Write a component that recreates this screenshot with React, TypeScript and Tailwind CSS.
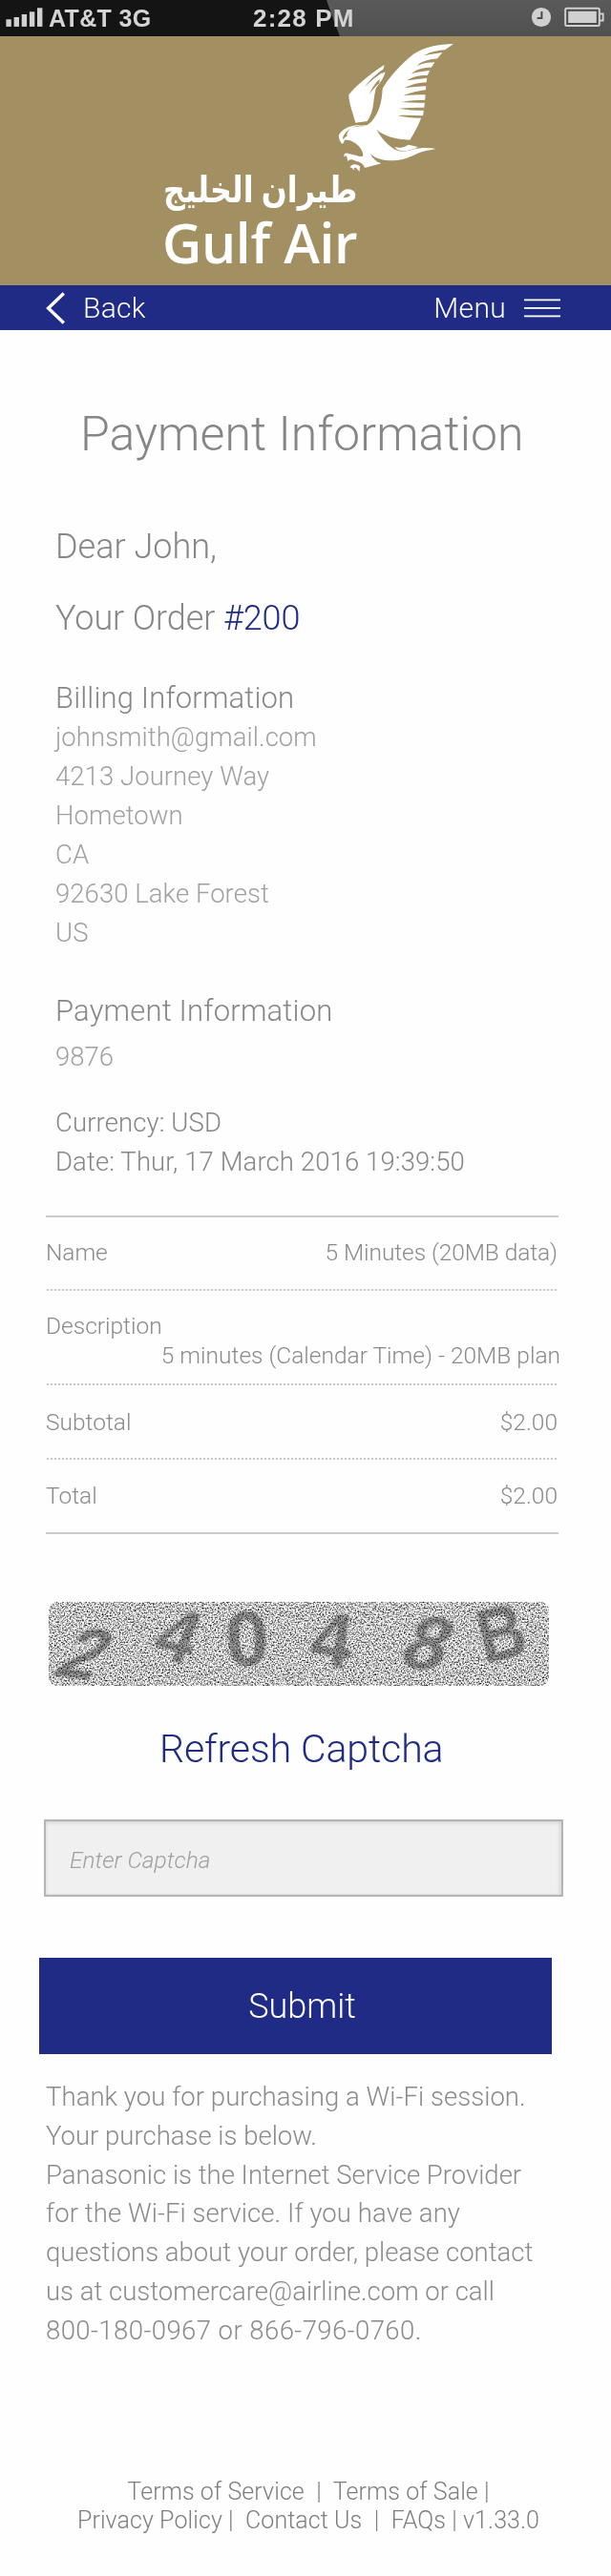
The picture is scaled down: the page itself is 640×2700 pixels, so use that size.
import type { ReactNode } from "react";

function StatusBar() {
  return (
    <div className="relative h-[38px] bg-[#141414] font-['Liberation_Sans'] text-[25px] leading-[38px] font-bold tracking-[0.35px] text-[#d4d4d4]">
      <div className="absolute inset-0 bg-linear-to-b from-[#5a5a5a] to-[#505050] [clip-path:polygon(342px_0,100%_0,100%_100%,356px_100%,350px_60%)]" />
      <div className="relative grid h-full grid-cols-[265px_1fr_auto] items-center">
        <div className="flex items-center pl-[6px]">
          <svg width="39" height="38" viewBox="0 0 39 38" fill="#d0d0d0">
            <rect x="0.4" y="20.3" width="5.4" height="7.6" />
            <rect x="8.6" y="18" width="5.4" height="9.9" />
            <rect x="16.7" y="15" width="5.4" height="12.9" />
            <rect x="24.9" y="12.3" width="5.4" height="15.6" />
            <rect x="33" y="8.3" width="5.4" height="19.6" />
          </svg>
          <span className="ml-[6px]">AT&amp;T 3G</span>
        </div>
        <span className="text-[26px] tracking-[1.2px]">2:28 PM</span>
        <div className="flex items-center pr-[5px]">
          <svg width="22" height="38" viewBox="0 0 22 38">
            <circle cx="11" cy="18" r="10.1" fill="#d0d0d0" />
            <path d="M11.4 12v7H6.6" fill="none" stroke="#4c4c4c" strokeWidth="2" />
          </svg>
          <svg className="ml-[13px]" width="44" height="38" viewBox="0 0 44 38">
            <rect x="1.2" y="8.7" width="35.6" height="18.4" rx="1.5" fill="#4a4a4a" stroke="#d0d0d0" strokeWidth="2" />
            <rect x="4.2" y="11.8" width="29.6" height="12.2" fill="#d0d0d0" />
            <path d="M37.5 14.5h3.2v7h-3.2" fill="none" stroke="#d0d0d0" strokeWidth="1.8" />
          </svg>
        </div>
      </div>
    </div>
  );
}

function Falcon() {
  return (
    <svg className="ml-[350px] block" width="130" height="145" viewBox="0 0 390 435">
      <g fill="#fff">
        <path d="M158 84C125 104 75 142 46 178C46 205 60 238 67 266L104 261C119 240 123 215 125 192C127 180 128 170 131 158C142 144 156 126 161 106L150 112Z" />
        <path d="M375 18C330 20 285 26 248 51C208 84 168 128 152 159C150 200 142 235 116 264L103 274L70 274C45 277 25 287 15 304C13 318 20 326 25 333L31 327C30 322 35 318 40 320C60 320 92 345 91 369C84 378 68 366 48 364C36 358 28 364 32 374C36 366 42 370 42 388C46 380 55 380 68 386C84 389 94 398 96 408L148 394C132 388 120 378 113 362C126 376 145 382 172 385C200 386 228 380 262 362C282 354 302 352 320 348C295 344 270 344 245 351C222 358 200 359 184 346C162 330 148 314 132 286C150 306 195 320 238 320C252 298 266 272 273 252L279 246L285 202L288 160L292 120L303 96L322 67L346 38Z" />
        <path d="M190 343C208 346 220 344 232 335C244 336 252 340 264 342C248 350 232 356 214 355C203 354 196 349 190 343Z" />
        <path d="M49 407C56 393 74 395 82 404C80 408 79 412 81 419C73 414 72 407 64 407C60 409 62 413 65 415C58 415 58 403 49 407Z" />
      </g>
      <g fill="#a39062">
        <path d="M349 36C325 39 300 43 282 55C300 49 322 49 341 45Z" />
        <path d="M325 64C300 67 276 71 260 87C278 78 298 77 317 76Z" />
        <path d="M307 92C282 92 258 97 242 112C262 105 282 105 302 101Z" />
        <path d="M295 117C270 116 246 120 229 133C250 129 271 129 294 125Z" />
        <path d="M292 139C266 140 242 145 222 157C244 153 268 152 292 151Z" />
        <path d="M291 162C266 165 240 170 217 181C240 178 266 178 290 178Z" />
        <path d="M288 194C262 194 236 196 212 201C238 203 262 204 287 203Z" />
        <path d="M284 218C258 218 230 218 204 221C230 226 256 227 283 227Z" />
        <path d="M281 244C252 243 226 242 200 243C226 250 252 252 279 251Z" />
        <path d="M163 92C138 107 114 128 96 153C115 133 138 116 162 101Z" />
        <path d="M143 128C130 140 118 156 109 179C118 166 128 153 142 142Z" />
        <path d="M70 277C54 280 38 291 28 310C26 319 30 321 33 313C36 309 40 311 41 307C38 305 42 291 54 283C60 279 80 277 98 276C90 273 80 274 70 277Z" />
      </g>
    </svg>
  );
}

function Header() {
  return (
    <header className="h-[261px] bg-[#a39062] pt-[2px] text-white">
      <Falcon />
      <div className="-mt-[15px] ml-[170px] flex w-[206px] flex-col">
        <span
          dir="rtl"
          className="h-[54px] origin-right scale-x-[0.835] pr-[2px] font-['Noto_Sans','DejaVu_Sans',sans-serif] text-[38px] leading-[54px] font-bold whitespace-nowrap"
        >
          طيران الخليج
        </span>
        <span className="font-['Open_Sans',sans-serif] text-[57px] leading-[60px] font-semibold tracking-[-0.35px] whitespace-nowrap">
          Gulf Air
        </span>
      </div>
    </header>
  );
}

function NavBar() {
  return (
    <nav className="flex h-[47px] items-center bg-[#1f2b85] pr-[53px] pl-[48px] text-[30px] leading-[47px] font-light tracking-[0.3px] text-white">
      <svg width="21" height="34" viewBox="0 0 21 34" fill="none" stroke="#fff" strokeWidth="3.4">
        <path d="M18.8 1.6L2.6 17L18.8 32.4" />
      </svg>
      <span className="ml-[18px]">Back</span>
      <span className="ml-auto">Menu</span>
      <svg className="ml-[19px]" width="38" height="20" viewBox="0 0 38 20" fill="#fff">
        <rect y="0.5" width="38" height="1.8" />
        <rect y="9" width="38" height="1.8" />
        <rect y="17.5" width="38" height="1.8" />
      </svg>
    </nav>
  );
}

function DottedRule() {
  return (
    <div className="mx-px h-[2px] bg-[repeating-linear-gradient(90deg,#c8c8c8_0_2px,#f6f6f6_2px_4px)]" />
  );
}

function Row({ label, children, className }: { label: string; children: ReactNode; className: string }) {
  return (
    <div className={`flex justify-between ${className}`}>
      <span>{label}</span>
      <span>{children}</span>
    </div>
  );
}

const glyphs = [
  { c: "2", t: "translate(39 54) rotate(8) skewX(-24) scale(0.95 0.98)" },
  { c: "4", t: "translate(136 35) rotate(14) skewX(-8) scale(0.92 1)" },
  { c: "0", t: "translate(208 38) rotate(-3) scale(1.02 1.02)" },
  { c: "4", t: "translate(297 39) rotate(8) scale(0.98 1)" },
  { c: "8", t: "translate(398 43) rotate(10) skewX(-14) scale(1 1.02)" },
  { c: "B", t: "translate(474 32) rotate(-14) scale(0.86 1)" },
];

function Captcha() {
  return (
    <svg className="mt-[71px] ml-[51px] block rounded-[9px]" width="524" height="88" viewBox="0 0 524 88">
      <filter id="grain" x="0" y="0" width="100%" height="100%" colorInterpolationFilters="sRGB">
        <feTurbulence type="fractalNoise" baseFrequency="0.62" numOctaves="2" seed="7" />
        <feColorMatrix values="2.1 0 0 0 -0.29  2.1 0 0 0 -0.29  2.1 0 0 0 -0.29  0 0 0 0 1" />
      </filter>
      <filter id="soft">
        <feGaussianBlur stdDeviation="1" />
      </filter>
      <rect width="524" height="88" filter="url(#grain)" />
      <g
        className="font-['Liberation_Sans'] text-[80px] font-bold mix-blend-multiply"
        fill="#a2a2a2"
        textAnchor="middle"
        filter="url(#soft)"
      >
        {glyphs.map((g, i) => (
          <text key={i} transform={g.t} y="28">
            {g.c}
          </text>
        ))}
      </g>
    </svg>
  );
}

export default function App() {
  return (
    <div className="min-h-[2700px] w-[640px] bg-[#fefefe] font-['Roboto',sans-serif] font-light">
      <StatusBar />
      <Header />
      <NavBar />

      <h1 className="mt-[79px] pl-[84px] text-[50px] leading-[60px] tracking-[0.09px] text-[#868686]">
        Payment Information
      </h1>

      <main className="pl-[58px] text-[#868686]">
        <p className="mt-[68px] text-[36px] leading-[40px]">Dear John,</p>
        <p className="mt-[35px] text-[36px] leading-[40px] tracking-[-0.1px]">
          Your Order <span className="text-[#1f2b85]">#200</span>
        </p>

        <h2 className="mt-[43px] text-[31px] leading-[41px] tracking-[0.14px]">Billing Information</h2>
        <div className="text-[27.5px] leading-[41px] tracking-[0.05px] text-[#a0a0a0]">
          <p>johnsmith@gmail.com</p>
          <p>4213 Journey Way</p>
          <p>Hometown</p>
          <p>CA</p>
          <p>92630 Lake Forest</p>
          <p>US</p>
        </div>

        <h2 className="mt-[41px] text-[31px] leading-[41px] tracking-[0.18px]">Payment Information</h2>
        <p className="mt-[7px] text-[27.5px] leading-[41px] text-[#a0a0a0]">9876</p>

        <div className="mt-[28px] text-[27.5px] leading-[41px] tracking-[0.1px]">
          <p>Currency: USD</p>
          <p>Date: Thur, 17 March 2016 19:39:50</p>
        </div>
      </main>

      <section className="mt-[36px] ml-[48px] w-[537px] border-y-2 border-[#cbcbcb] text-[24.5px] leading-[31px] text-[#8a8a8a]">
        <Row label="Name" className="pt-[21px] pr-px pb-[23px] tracking-[-0.08px]">
          5 Minutes (20MB data)
        </Row>
        <DottedRule />
        <div className="pt-[21px] pb-[14px]">
          <p>Description</p>
          <p className="-mr-[2px] text-right">5 minutes (Calendar Time) - 20MB plan</p>
        </div>
        <DottedRule />
        <Row label="Subtotal" className="pt-[23px] pr-px pb-[22px]">
          $2.00
        </Row>
        <DottedRule />
        <Row label="Total" className="pt-[22px] pr-px pb-[23px]">
          $2.00
        </Row>
      </section>

      <Captcha />

      <p className="mt-[41px] pl-[167px] text-[41px] leading-[50px] tracking-[-0.1px] text-[#1f2b85]">Refresh Captcha</p>

      <div className="mt-[49px] ml-[46px] h-[81px] w-[544px] border-2 border-[#b4b4b4] bg-[#f0f0f0] px-[25px] pt-[25px] shadow-[inset_-1px_1px_4px_rgba(0,0,0,0.16)]">
        <p className="text-[24.5px] leading-[31px] text-[#a0a0a0] italic">Enter Captcha</p>
      </div>

      <button className="mt-[64px] ml-[41px] block h-[101px] w-[537px] bg-[#1f2b85] pl-[14px] text-center text-[36px] leading-[40px] text-white">
        Submit
      </button>

      <div className="mt-[25px] ml-[48px] text-[27.5px] leading-[40.75px] whitespace-nowrap text-[#8a8a8a]">
        <p className="tracking-[0.05px]">Thank you for purchasing a Wi-Fi session.</p>
        <p>Your purchase is below.</p>
        <p>Panasonic is the Internet Service Provider</p>
        <p className="tracking-[0.08px]">for the Wi-Fi service. If you have any</p>
        <p>questions about your order, please contact</p>
        <p>us at customercare@airline.com or call</p>
        <p className="tracking-[0.43px]">800-180-0967 or 866-796-0760.</p>
      </div>

      <footer className="mt-[134px] pl-[6px] text-center text-[25px] leading-[30px] tracking-[0.08px] whitespace-pre text-[#7e7e7e]">
        <p>{"Terms of Service  |  Terms of Sale |"}</p>
        <p>{"Privacy Policy |  Contact Us  |  FAQs | v1.33.0"}</p>
      </footer>
    </div>
  );
}
